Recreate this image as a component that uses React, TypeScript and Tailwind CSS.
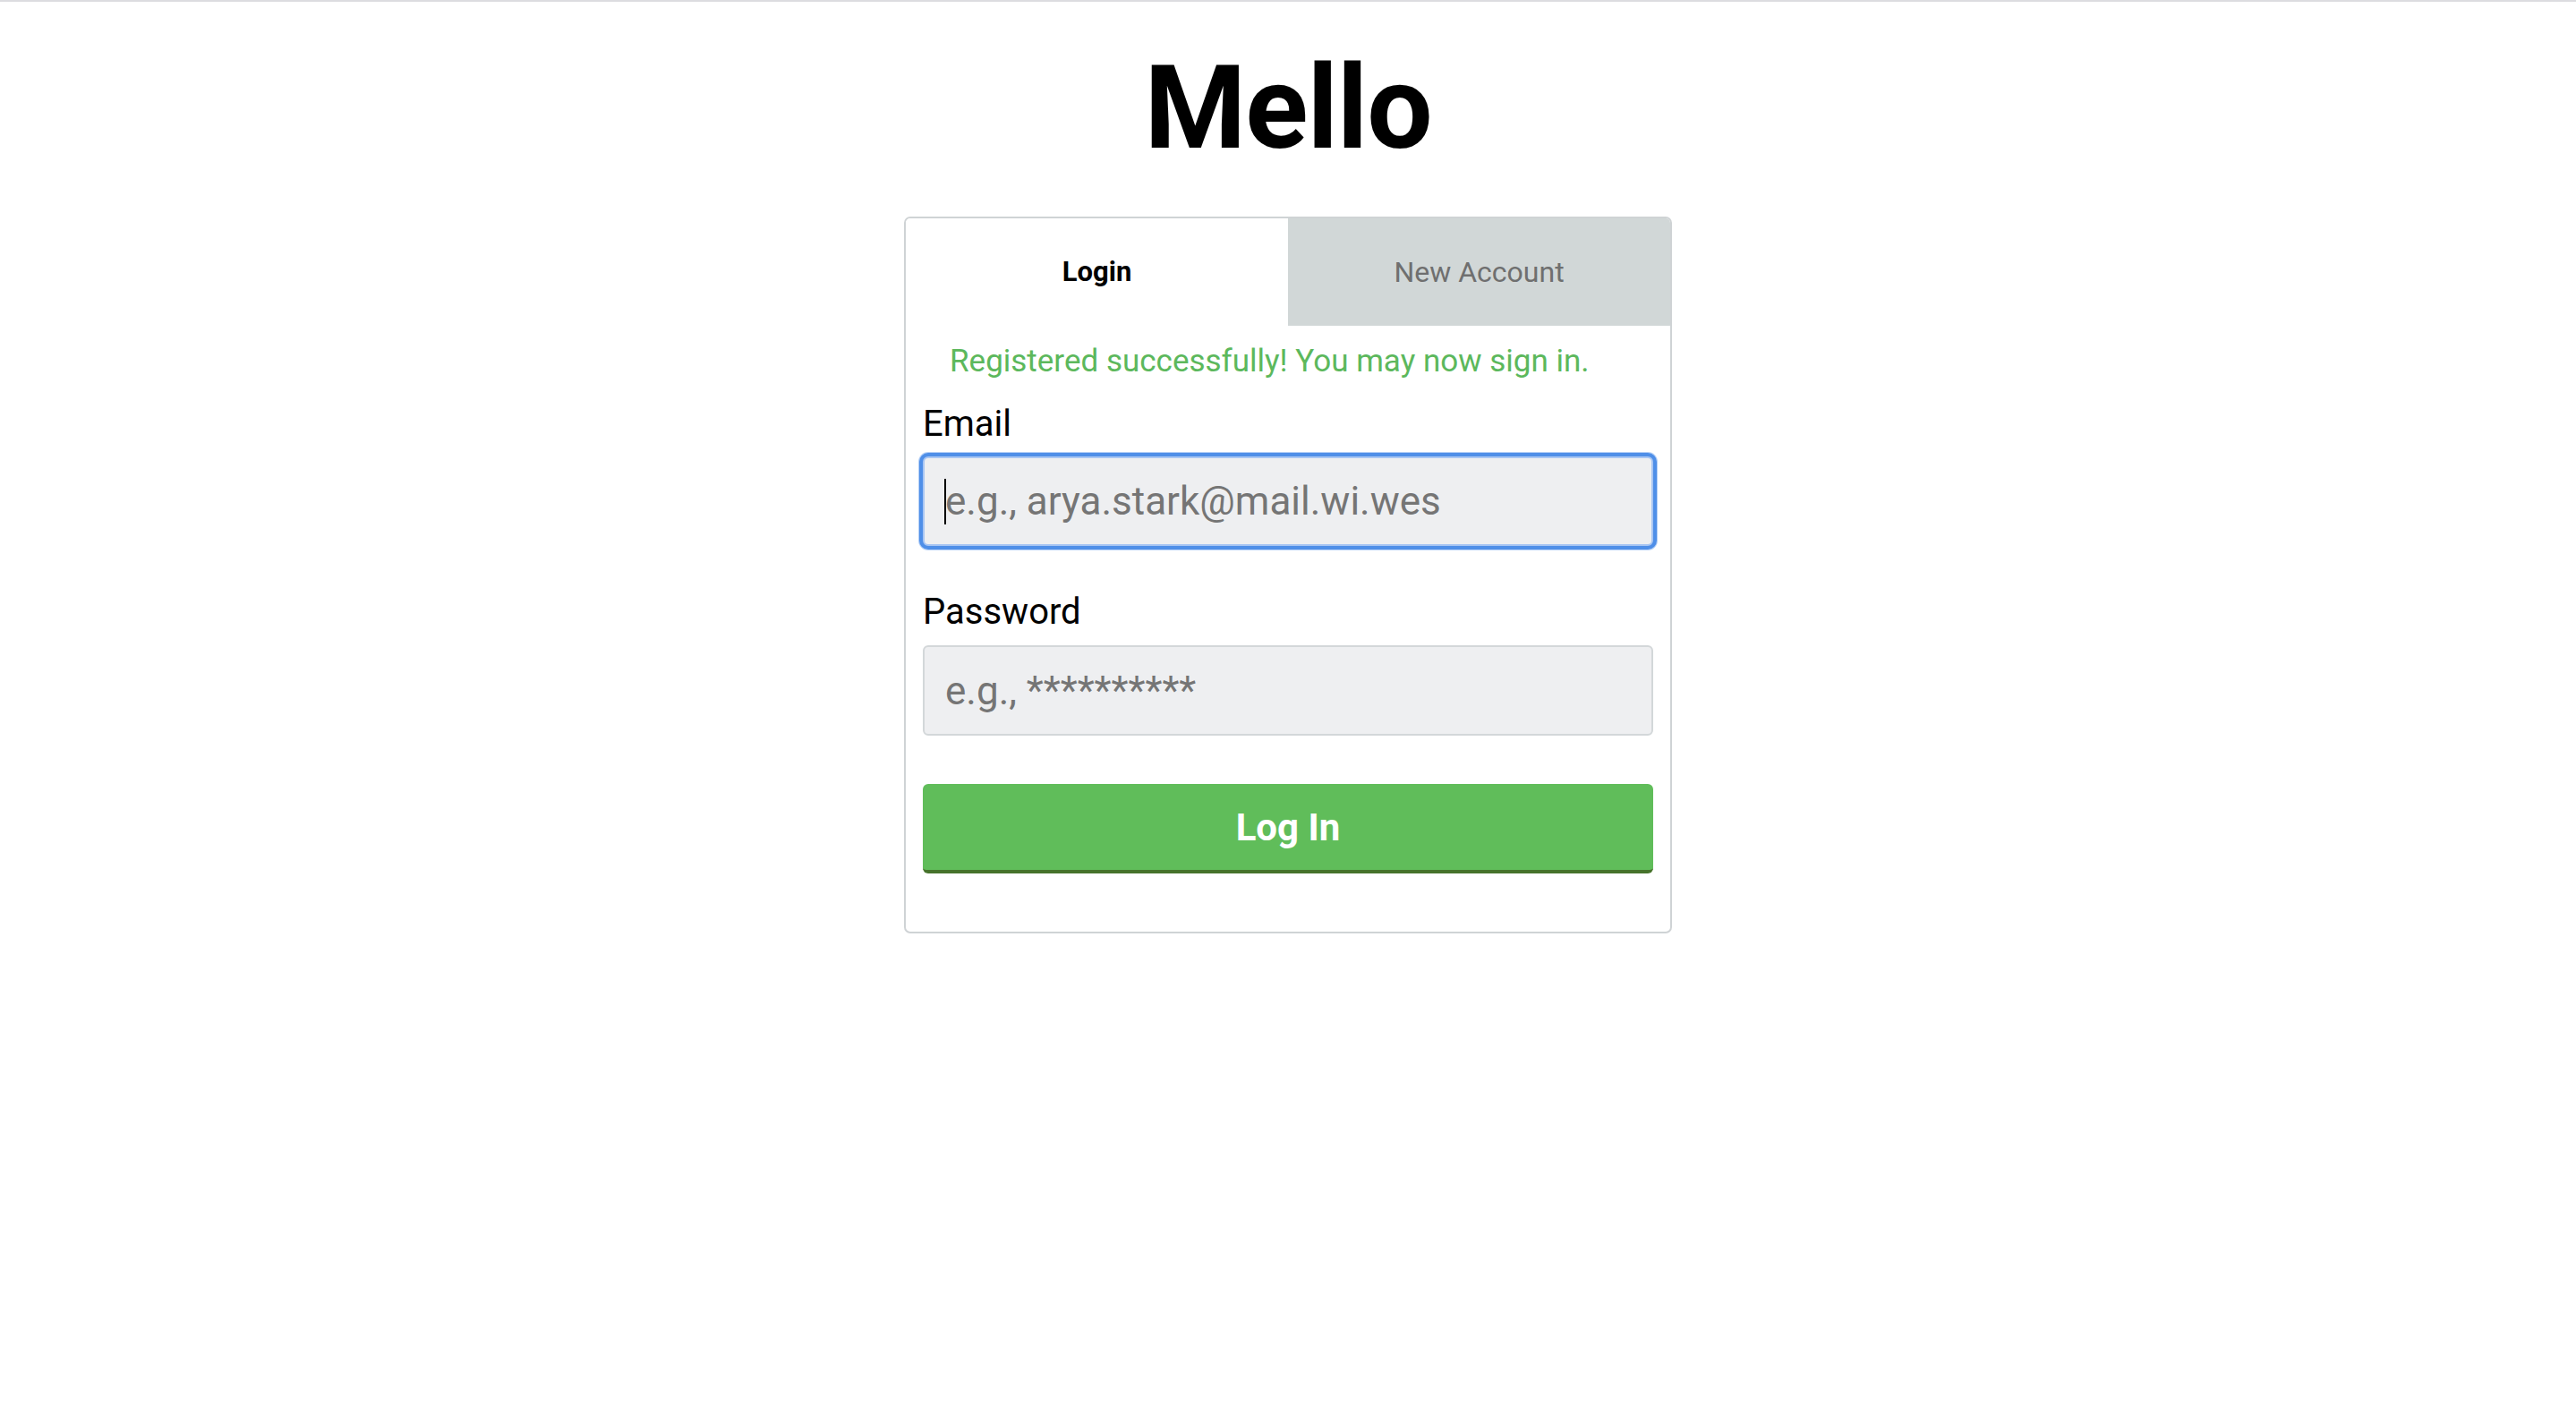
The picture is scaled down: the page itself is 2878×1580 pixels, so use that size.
import { useState } from "react";

const font = { fontFamily: "Roboto, 'Noto Sans', Arial, sans-serif" };

export default function App() {
  const [tab, setTab] = useState<"login" | "new">("login");
  const [email, setEmail] = useState("");
  const [password, setPassword] = useState("");

  return (
    <div className="min-h-screen bg-white border-t-2 border-[#dcdce0]" style={font}>
      <h1 className="mt-[54px] h-[128px] text-center text-[130px] font-bold leading-none text-black tracking-[-1px]">
        Mello
      </h1>

      <div className="mx-auto mt-[58px] w-[858px] overflow-hidden rounded-[7px] border-2 border-[#cfd3d5] bg-white">
        <div className="grid h-[120px] grid-cols-2">
          <button
            type="button"
            onClick={() => setTab("login")}
            className={
              tab === "login"
                ? "flex items-center justify-center bg-white text-[31px] font-bold text-black"
                : "flex items-center justify-center bg-[#d1d7d7] text-[32px] text-[#6f6f6f]"
            }
          >
            Login
          </button>
          <button
            type="button"
            onClick={() => setTab("new")}
            className={
              tab === "new"
                ? "flex items-center justify-center bg-white text-[31px] font-bold text-black"
                : "flex items-center justify-center bg-[#d1d7d7] text-[32px] text-[#6f6f6f]"
            }
          >
            New Account
          </button>
        </div>

        <form className="flex flex-col px-[19px] pb-[65px]" onSubmit={(e) => e.preventDefault()}>
          <p className="mt-[20px] h-[40px] pl-[30px] text-[35px] leading-[40px] text-[#5cb85c]">
            Registered successfully! You may now sign in.
          </p>

          <label className="mt-[26px] h-[48px] text-[40px] leading-[48px] text-black">Email</label>
          <div className="relative mt-[12px]">
            <input
              type="email"
              value={email}
              onChange={(e) => setEmail(e.target.value)}
              placeholder="e.g., arya.stark@mail.wi.wes"
              className="block h-[100px] w-full rounded-[6px] border-2 border-[#a9c6f3] bg-[#eeeff1] px-[23px] text-[44px] text-black placeholder:text-[#757575] outline-none shadow-[0_0_0_4px_#4f8fe8,0_0_0_5px_#b5d0f7]"
            />
            {email === "" && (
              <span className="pointer-events-none absolute left-[24px] top-[25px] h-[51px] w-[2px] bg-black" />
            )}
          </div>

          <label className="mt-[50px] h-[48px] text-[40px] leading-[48px] text-black">Password</label>
          <input
            type="password"
            value={password}
            onChange={(e) => setPassword(e.target.value)}
            placeholder="e.g., **********"
            className="mt-[13px] block h-[101px] w-full rounded-[6px] border-2 border-[#d3d7d9] bg-[#eeeff1] px-[23px] text-[44px] text-black placeholder:text-[#757575] outline-none"
          />

          <button
            type="submit"
            className="mt-[54px] h-[100px] w-full rounded-[6px] border-b-4 border-[#46732b] bg-[#60bd5a] text-[42px] font-bold text-white"
          >
            Log In
          </button>
        </form>
      </div>
    </div>
  );
}
